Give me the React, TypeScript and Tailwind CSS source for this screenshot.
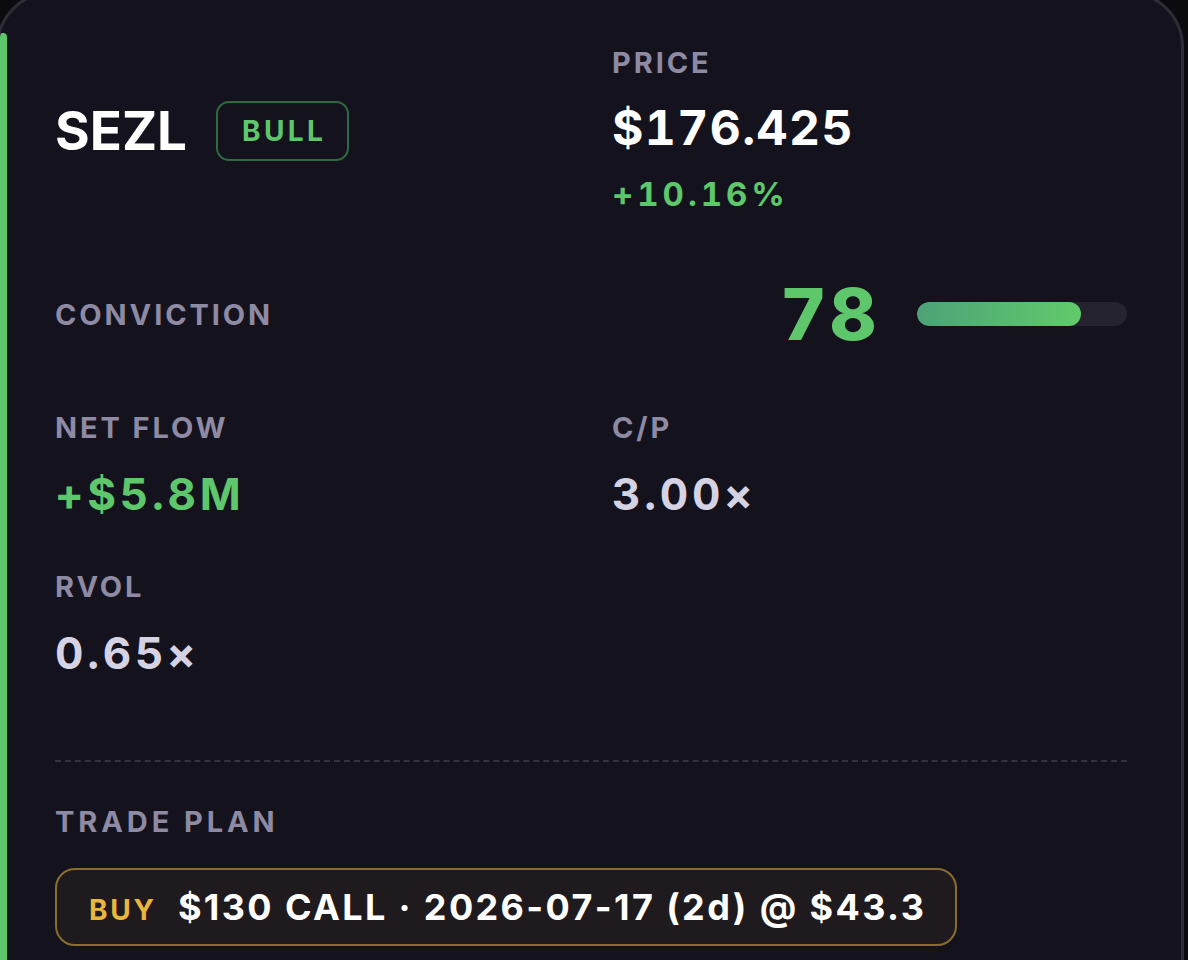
import React from 'react'

// Ticker card: symbol + bias badge, price, conviction meter, flow stats and the trade plan
const LABEL = 'text-[29px] leading-none font-bold tracking-[0.1em] text-[#8e8aa4]'

function Metric({ label, value, tone }: { label: string; value: string; tone: string }) {
  return (
    <div>
      <div className={LABEL}>{label}</div>
      <div className={`mt-[30px] text-[44px] leading-none font-bold tabular-nums tracking-[0.085em] ${tone}`}>
        {value}
      </div>
    </div>
  )
}

export default function App() {
  const conviction = 78

  return (
    <div className="h-[960px] w-full overflow-hidden bg-[#0b0a0e] font-['Inter','Noto_Sans',sans-serif]">
      <div className="-ml-[4px] -mt-[9px] flex h-[1100px] w-[1188px] overflow-hidden rounded-[56px] border-[3px] border-[#2d2c37] bg-[#14131d]">
        {/* bias accent strip */}
        <div className="mt-[39px] w-[8px] shrink-0 rounded-t-[5px] bg-[#5ec66b]" />

        <div className="flex-1 pl-[48px] pr-[54px] pt-[54px]">
          {/* header */}
          <div className="grid grid-cols-2 items-center gap-x-[42px]">
            <div className="flex items-center gap-[29px] pt-[3px]">
              <span className="text-[53px] leading-none font-bold text-white">SEZL</span>
              <span className="rounded-[13px] border-2 border-[#2f6a40] pl-[24px] pr-[21px] py-[14px] text-[28px] leading-none font-bold tracking-[0.12em] text-[#5ec66b]">
                BULL
              </span>
            </div>
            <div>
              <div className={LABEL}>PRICE</div>
              <div className="mt-[27px] text-[48px] leading-none font-bold tabular-nums tracking-[0.03em] text-white">
                $176.425
              </div>
              <div className="mt-[26px] text-[33px] leading-none font-bold tabular-nums tracking-[0.12em] text-[#5ec66b]">
                +10.16%
              </div>
            </div>
          </div>

          {/* conviction */}
          <div className="mt-[67px] flex items-center justify-between">
            <div className={LABEL}>CONVICTION</div>
            <div className="flex items-center gap-[38px]">
              <span className="text-[72px] leading-none font-extrabold tabular-nums tracking-[0.04em] text-[#5ec66b]">
                {conviction}
              </span>
              <div className="h-[24px] w-[210px] overflow-hidden rounded-full bg-[#25242e]">
                <div
                  className="h-full rounded-full bg-gradient-to-r from-[#4da276] to-[#62ca6a]"
                  style={{ width: `${conviction}%` }}
                />
              </div>
            </div>
          </div>

          {/* flow stats */}
          <div className="mt-[63px] grid grid-cols-2 gap-x-[42px] gap-y-[56px]">
            <Metric label="NET FLOW" value="+$5.8M" tone="text-[#5ec66b]" />
            <Metric label="C/P" value="3.00×" tone="text-[#d5d3e3]" />
            <Metric label="RVOL" value="0.65×" tone="text-[#d5d3e3]" />
          </div>

          <div className="mt-[85px] border-t-2 border-dashed border-[#33323d]" />

          {/* trade plan */}
          <div className={`mt-[45px] ${LABEL} tracking-[0.135em]`}>TRADE PLAN</div>
          <div className="mt-[32px] inline-flex items-baseline gap-[21px] rounded-[20px] border-[2.5px] border-[#8a6d2d] bg-[#1e1a1d] pl-[32px] pr-[29px] py-[19px]">
            <span className="text-[28px] leading-none font-bold tracking-[0.1em] text-[#eab63b]">BUY</span>
            <span className="text-[36px] leading-none font-bold tracking-[0.066em] text-white">
              $130 CALL · 2026-07-17 (2d) @ $43.3
            </span>
          </div>
        </div>
      </div>
    </div>
  )
}
